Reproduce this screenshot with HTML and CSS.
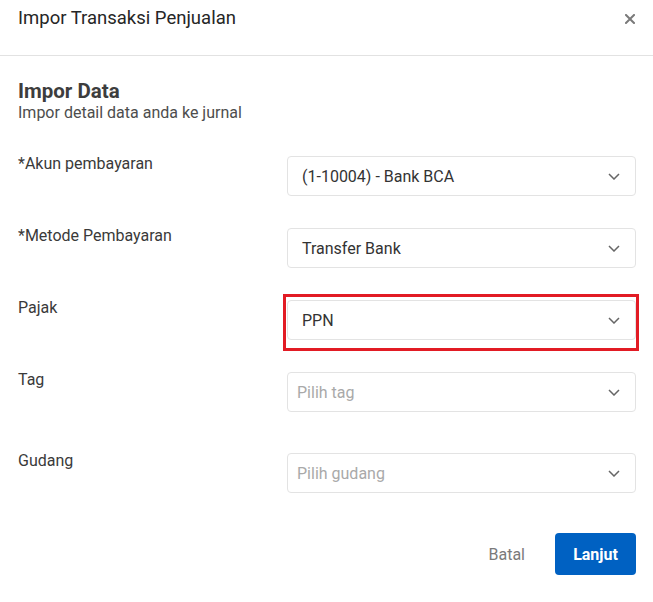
FILE: index.html
```html
<!DOCTYPE html>
<html lang="id">
<head>
<meta charset="utf-8">
<title>Impor Transaksi Penjualan</title>
<link rel="stylesheet" href="styles.css">
</head>
<body>
<div class="modal">
  <header class="modal-header">
    <h1 class="modal-title">Impor Transaksi Penjualan</h1>
    <button class="close" aria-label="Tutup">
      <svg width="10" height="10" viewBox="0 0 10 10"><path d="M1 1L9 9M9 1L1 9" stroke="#7a7a7a" stroke-width="2" stroke-linecap="square"/></svg>
    </button>
  </header>
  <section class="modal-body">
    <h2 class="section-title">Impor Data</h2>
    <p class="section-sub">Impor detail data anda ke jurnal</p>

    <div class="form">
      <div class="row">
        <label class="label">*Akun pembayaran</label>
        <div class="select"><span class="value">(1-10004) - Bank BCA</span><svg class="chev" width="12" height="7" viewBox="0 0 12 7"><path d="M1 1l5 5 5-5" fill="none" stroke="#666" stroke-width="1.5"/></svg></div>
      </div>
      <div class="row">
        <label class="label">*Metode Pembayaran</label>
        <div class="select"><span class="value">Transfer Bank</span><svg class="chev" width="12" height="7" viewBox="0 0 12 7"><path d="M1 1l5 5 5-5" fill="none" stroke="#666" stroke-width="1.5"/></svg></div>
      </div>
      <div class="row">
        <label class="label">Pajak</label>
        <div class="select highlighted"><span class="value">PPN</span><svg class="chev" width="12" height="7" viewBox="0 0 12 7"><path d="M1 1l5 5 5-5" fill="none" stroke="#666" stroke-width="1.5"/></svg></div>
      </div>
      <div class="row">
        <label class="label">Tag</label>
        <div class="select"><span class="value placeholder">Pilih tag</span><svg class="chev" width="12" height="7" viewBox="0 0 12 7"><path d="M1 1l5 5 5-5" fill="none" stroke="#666" stroke-width="1.5"/></svg></div>
      </div>
      <div class="row row-last">
        <label class="label">Gudang</label>
        <div class="select"><span class="value placeholder">Pilih gudang</span><svg class="chev" width="12" height="7" viewBox="0 0 12 7"><path d="M1 1l5 5 5-5" fill="none" stroke="#666" stroke-width="1.5"/></svg></div>
      </div>
    </div>

    <div class="actions">
      <button class="btn-cancel">Batal</button>
      <button class="btn-primary">Lanjut</button>
    </div>
  </section>
</div>
</body>
</html>
```

FILE: styles.css
```css
* { box-sizing: border-box; }
html, body { margin: 0; padding: 0; background: #fff; }
body {
  font-family: Roboto, "Liberation Sans", sans-serif;
  color: #333;
  width: 653px;
}
.modal { width: 653px; }
.modal-header {
  height: 56px;
  border-bottom: 1px solid #e2e2e2;
  display: flex;
  align-items: flex-start;
  justify-content: space-between;
  padding: 6px 18px 0 18px;
}
.modal-title {
  margin: 0;
  font-size: 18.5px;
  font-weight: 400;
  line-height: 24px;
  color: #262626;
}
.close {
  border: 0;
  background: none;
  padding: 0;
  margin: 8px 0 0 0;
  width: 10px;
  height: 10px;
  display: flex;
}
.modal-body {
  padding: 23px 17px 0 18px;
}
.section-title {
  margin: 0;
  font-size: 20.5px;
  font-weight: 700;
  line-height: 25px;
  color: #3d3d3d;
}
.section-sub {
  margin: 0;
  font-size: 16px;
  line-height: 18px;
  color: #4d4d4d;
}
.form {
  margin-top: 34px;
  display: flex;
  flex-direction: column;
  gap: 32px;
}
.row {
  display: grid;
  grid-template-columns: 269px 1fr;
  align-items: start;
}
.row-last { margin-top: 9px; }
.label {
  font-size: 16px;
  line-height: 15px;
  color: #3a3a3a;
}
.select {
  position: relative;
  height: 40px;
  border: 1px solid #e3e3e3;
  border-radius: 4px;
  display: flex;
  align-items: center;
  justify-content: space-between;
  padding: 0 15px 0 14px;
  background: #fff;
}
.value {
  font-size: 16px;
  color: #333;
}
.placeholder { color: #a9a9a9; margin-left: -5px; }
.chev { display: block; }
.highlighted::after {
  content: "";
  position: absolute;
  top: -7px;
  left: -5px;
  right: -4px;
  bottom: -12px;
  border: 3px solid #e21b24;
  pointer-events: none;
}
.actions {
  margin-top: 40px;
  display: flex;
  justify-content: flex-end;
  align-items: center;
  gap: 30px;
}
.btn-cancel {
  border: 0;
  background: none;
  font-family: inherit;
  font-size: 16px;
  color: #7a7a7a;
  padding: 0;
}
.btn-primary {
  border: 0;
  background: #0061c2;
  color: #fff;
  font-family: inherit;
  font-size: 16px;
  font-weight: 700;
  width: 81px;
  height: 42px;
  border-radius: 4px;
}
```
